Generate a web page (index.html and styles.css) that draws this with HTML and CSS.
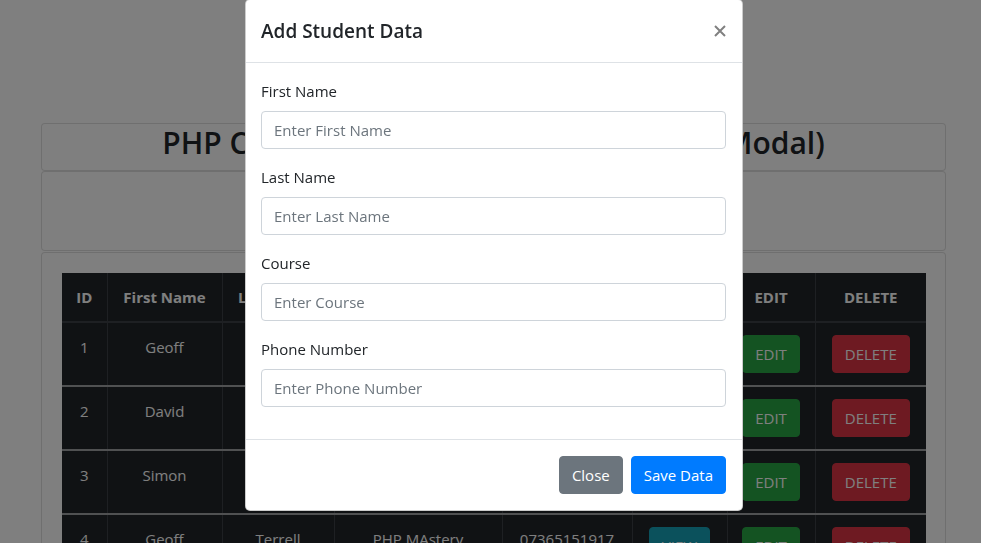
FILE: index.html
```html
<!DOCTYPE html>
<html lang="en">
<head>
<meta charset="utf-8">
<title>PHP CRUD</title>
<link rel="stylesheet" href="styles.css">
</head>
<body>
<div class="page">
  <div class="card title-card">
    <h2 class="page-title">PHP CRUD Operation (Using Bootstrap Modal)</h2>
  </div>
  <div class="card">
    <div class="card-body center">
      <button class="btn btn-primary">ADD DATA</button>
    </div>
  </div>
  <div class="card card-table">
    <div class="card-body">
      <table class="data-table">
        <colgroup>
          <col class="c-id"><col class="c-first"><col class="c-last"><col class="c-course"><col class="c-phone"><col class="c-view"><col class="c-edit"><col class="c-del">
        </colgroup>
        <thead>
          <tr><th>ID</th><th>First Name</th><th>Last Name</th><th>Course</th><th>Phone Number</th><th>VIEW</th><th>EDIT</th><th>DELETE</th></tr>
        </thead>
        <tbody>
          <tr><td>1</td><td>Geoff</td><td>Smith</td><td>PHP Basics</td><td>07123456789</td><td><button class="btn btn-info">VIEW</button></td><td><button class="btn btn-success">EDIT</button></td><td><button class="btn btn-danger">DELETE</button></td></tr>
          <tr><td>2</td><td>David</td><td>Jones</td><td>Laravel</td><td>07234567890</td><td><button class="btn btn-info">VIEW</button></td><td><button class="btn btn-success">EDIT</button></td><td><button class="btn btn-danger">DELETE</button></td></tr>
          <tr><td>3</td><td>Simon</td><td>Brown</td><td>JavaScript</td><td>07345678901</td><td><button class="btn btn-info">VIEW</button></td><td><button class="btn btn-success">EDIT</button></td><td><button class="btn btn-danger">DELETE</button></td></tr>
          <tr><td>4</td><td>Geoff</td><td>Terrell</td><td>PHP MAstery</td><td>07365151917</td><td><button class="btn btn-info">VIEW</button></td><td><button class="btn btn-success">EDIT</button></td><td><button class="btn btn-danger">DELETE</button></td></tr>
        </tbody>
      </table>
    </div>
  </div>
</div>

<div class="backdrop"></div>

<div class="modal">
  <div class="modal-header">
    <h5 class="modal-title">Add Student Data</h5>
    <button class="close" aria-label="Close">
      <svg width="12" height="12" viewBox="0 0 12 12"><path d="M1 1 L11 11 M11 1 L1 11" stroke="#808080" stroke-width="2" stroke-linecap="butt"/></svg>
    </button>
  </div>
  <div class="modal-body">
    <div class="form-group">
      <label class="form-label">First Name</label>
      <input class="form-control" type="text" placeholder="Enter First Name">
    </div>
    <div class="form-group">
      <label class="form-label">Last Name</label>
      <input class="form-control" type="text" placeholder="Enter Last Name">
    </div>
    <div class="form-group">
      <label class="form-label">Course</label>
      <input class="form-control" type="text" placeholder="Enter Course">
    </div>
    <div class="form-group">
      <label class="form-label">Phone Number</label>
      <input class="form-control" type="text" placeholder="Enter Phone Number">
    </div>
  </div>
  <div class="modal-footer">
    <button class="btn btn-secondary">Close</button>
    <button class="btn btn-primary">Save Data</button>
  </div>
</div>
</body>
</html>
```
FILE: styles.css
```css
* { box-sizing: border-box; }

html, body {
  margin: 0;
  height: 543px;
  overflow: hidden;
}

body {
  background: #fff;
  color: #212529;
  font-family: "Open Sans", "Noto Sans", sans-serif;
  font-size: 15px;
  line-height: 24px;
}

.page {
  width: 905px;
  margin-left: 41px;
  padding-top: 123px;
}

.card {
  border: 1px solid rgba(0, 0, 0, 0.125);
  border-radius: 4px;
  background: #fff;
}

.card-table { margin-top: 1px; }

.title-card { height: 48px; }

.page-title {
  margin: 0 0 8px;
  font-size: 30px;
  line-height: 38px;
  font-weight: 600;
  text-align: center;
  white-space: nowrap;
  color: #212529;
}

.card-body { padding: 20px; }
.center { display: flex; justify-content: center; }

.btn {
  display: inline-block;
  height: 38px;
  padding: 6px 12px;
  border: 1px solid transparent;
  border-radius: 4px;
  font-family: inherit;
  font-size: 15px;
  line-height: 24px;
  color: #fff;
  cursor: pointer;
}

.btn-primary { background: #007bff; border-color: #007bff; }
.btn-secondary { background: #6c757d; border-color: #6c757d; }
.btn-info { background: #17a2b8; border-color: #17a2b8; }
.btn-success { background: #28a745; border-color: #28a745; }
.btn-danger { background: #dc3545; border-color: #dc3545; }

.data-table {
  width: 864px;
  table-layout: fixed;
  border-collapse: collapse;
  background: #212529;
  color: #fff;
  text-align: center;
}

.c-id { width: 45px; }
.c-first { width: 115px; }
.c-last { width: 112px; }
.c-course { width: 168px; }
.c-phone { width: 130px; }
.c-view { width: 95px; }
.c-edit { width: 88px; }
.c-del { width: 111px; }

.data-table th,
.data-table td {
  padding: 12px 8px;
  border: 1px solid #3c4146;
  vertical-align: top;
  white-space: nowrap;
}

.data-table th {
  font-weight: 700;
  border-top: 0;
  border-bottom: 2px solid #3c4146;
}

.data-table td {
  border-bottom: 2px solid #a0a2a5;
}

.data-table th:first-child,
.data-table td:first-child { border-left: 0; }
.data-table th:last-child,
.data-table td:last-child { border-right: 0; }

.backdrop {
  position: fixed;
  inset: 0;
  background: rgba(0, 0, 0, 0.5);
}

.modal {
  position: fixed;
  top: -1px;
  left: 245px;
  width: 498px;
  background: #fff;
  border: 1px solid rgba(0, 0, 0, 0.2);
  border-radius: 5px;
}

.modal-header {
  display: flex;
  align-items: flex-start;
  justify-content: space-between;
  padding: 16px 16px 16px 15px;
  border-bottom: 1px solid #dee2e6;
}

.modal-title {
  margin: 0;
  font-size: 19px;
  line-height: 30px;
  font-weight: 600;
  color: #212529;
}

.close {
  display: flex;
  align-items: center;
  justify-content: center;
  width: 44px;
  height: 62px;
  margin: -16px -16px -16px auto;
  padding: 0;
  border: 0;
  background: transparent;
  cursor: pointer;
}

.modal-body { padding: 16px 16px 16px 15px; }

.form-group { margin-bottom: 16px; }

.form-label {
  display: inline-block;
  margin-bottom: 8px;
  color: #212529;
}

.form-control {
  display: block;
  width: 100%;
  height: 38px;
  padding: 6px 12px;
  border: 1px solid #ced4da;
  border-radius: 4px;
  font-family: inherit;
  font-size: 15px;
  line-height: 24px;
  color: #495057;
  background: #fff;
}

.form-control::placeholder { color: #6c757d; opacity: 1; }

.modal-footer {
  display: flex;
  justify-content: flex-end;
  align-items: center;
  padding: 12px;
  border-top: 1px solid #dee2e6;
}

.modal-footer .btn { margin: 4px; }
```
